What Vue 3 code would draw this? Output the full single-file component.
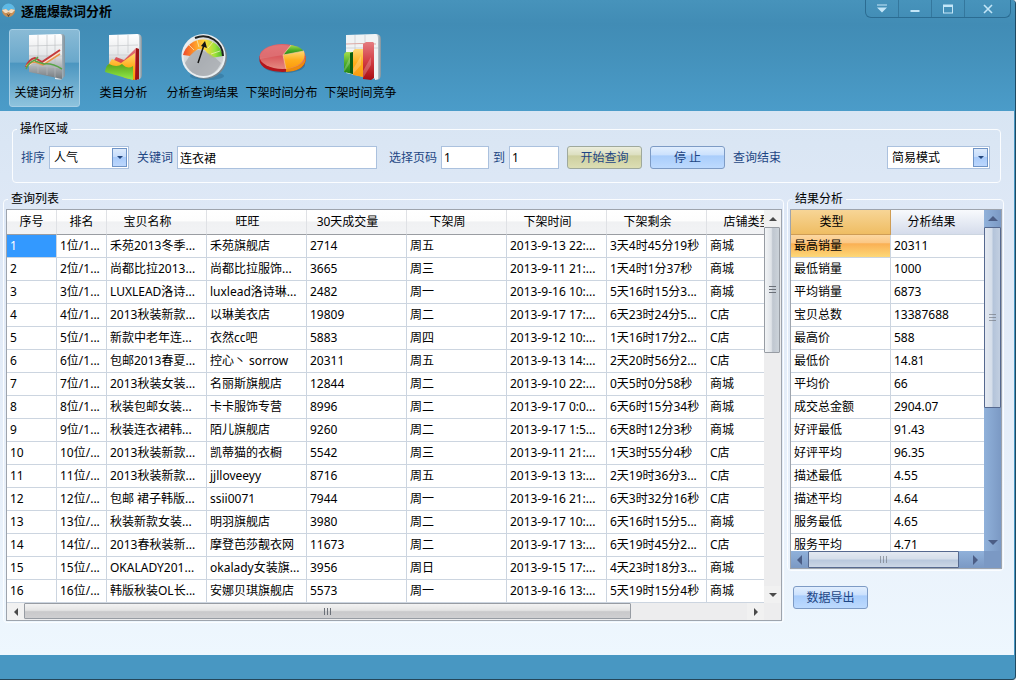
<script setup>
import { ref } from 'vue';

const tools = ['关键词分析', '类目分析', '分析查询结果', '下架时间分布', '下架时间竞争'];
const activeTool = ref(0);

const sort = ref('人气');
const keyword = ref('连衣裙');
const pageFrom = ref('1');
const pageTo = ref('1');
const mode = ref('简易模式');

const columns = ['序号', '排名', '宝贝名称', '旺旺', '30天成交量', '下架周', '下架时间', '下架剩余', '店铺类型'];
const rows = [
  ['1', '1位/1...', '禾苑2013冬季...', '禾苑旗舰店', '2714', '周五', '2013-9-13 22:...', '3天4时45分19秒', '商城'],
  ['2', '2位/1...', '尚都比拉2013...', '尚都比拉服饰...', '3665', '周三', '2013-9-11 21:...', '1天4时1分37秒', '商城'],
  ['3', '3位/1...', 'LUXLEAD洛诗...', 'luxlead洛诗琳...', '2482', '周一', '2013-9-16 10:...', '5天16时15分3...', '商城'],
  ['4', '4位/1...', '2013秋装新款...', '以琳美衣店', '19809', '周二', '2013-9-17 17:...', '6天23时24分5...', 'C店'],
  ['5', '5位/1...', '新款中老年连...', '衣然cc吧', '5883', '周四', '2013-9-12 10:...', '1天16时17分2...', 'C店'],
  ['6', '6位/1...', '包邮2013春夏...', '控心丶 sorrow', '20311', '周五', '2013-9-13 14:...', '2天20时56分2...', 'C店'],
  ['7', '7位/1...', '2013秋装女装...', '名丽斯旗舰店', '12844', '周二', '2013-9-10 22:...', '0天5时0分58秒', '商城'],
  ['8', '8位/1...', '秋装包邮女装...', '卡卡服饰专营', '8996', '周二', '2013-9-17 0:0...', '6天6时15分34秒', '商城'],
  ['9', '9位/1...', '秋装连衣裙韩...', '陌儿旗舰店', '9260', '周二', '2013-9-17 1:5...', '6天8时12分3秒', '商城'],
  ['10', '10位/...', '2013秋装新款...', '凯蒂猫的衣橱', '5542', '周三', '2013-9-11 21:...', '1天3时55分4秒', 'C店'],
  ['11', '11位/...', '2013秋装新款...', 'jjlloveeyy', '8716', '周五', '2013-9-13 13:...', '2天19时36分3...', 'C店'],
  ['12', '12位/...', '包邮 裙子韩版...', 'ssii0071', '7944', '周一', '2013-9-16 21:...', '6天3时32分16秒', 'C店'],
  ['13', '13位/...', '秋装新款女装...', '明羽旗舰店', '3980', '周二', '2013-9-17 10:...', '6天16时15分5...', '商城'],
  ['14', '14位/...', '2013春秋装新...', '摩登芭莎靓衣网', '11673', '周二', '2013-9-17 13:...', '6天19时45分2...', 'C店'],
  ['15', '15位/...', 'OKALADY201...', 'okalady女装旗...', '3956', '周日', '2013-9-15 17:...', '4天23时18分3...', '商城'],
  ['16', '16位/...', '韩版秋装OL长...', '安娜贝琪旗舰店', '5573', '周一', '2013-9-16 13:...', '5天19时15分4秒', '商城']
];

const results = [
  ['最高销量', '20311'],
  ['最低销量', '1000'],
  ['平均销量', '6873'],
  ['宝贝总数', '13387688'],
  ['最高价', '588'],
  ['最低价', '14.81'],
  ['平均价', '66'],
  ['成交总金额', '2904.07'],
  ['好评最低', '91.43'],
  ['好评平均', '96.35'],
  ['描述最低', '4.55'],
  ['描述平均', '4.64'],
  ['服务最低', '4.65'],
  ['服务平均', '4.71']
];
</script>

<template>
  <div class="window">
    <header class="top">
      <div class="title-bar">
        <svg class="logo" viewBox="0 0 15 15">
          <circle cx="7.5" cy="7.5" r="6.5" fill="#c98f55" />
          <path d="M1 7A6.5 6.5 0 0 1 14 7L10 6 7.500 8 5 6Z" fill="#5db9e6" />
          <path d="M1 7l4-1 2.500 2L10 6l4 1-3 3H9.500L7.500 9 5.500 10H4Z" fill="#f3dcc0" />
          <path d="M5.500 10.500l2 1.500 2-1.500-2 3.500Z" fill="#5c4630" />
        </svg>
        <h1>逐鹿爆款词分析</h1>
        <div class="win-controls">
          <button type="button" aria-label="菜单">
            <svg viewBox="0 0 12 10"><path d="M1 .5h10v1H1zM1 3.500h10L6 8.500Z" fill="#c3e6f8" /></svg>
          </button>
          <button type="button" aria-label="最小化">
            <svg viewBox="0 0 12 10"><path d="M1.500 6h9v2h-9z" fill="#c3e6f8" /></svg>
          </button>
          <button type="button" aria-label="最大化">
            <svg viewBox="0 0 12 10"><path d="M1 .5h10v9H1zM2 3v5.500h8V3Z" fill="#c3e6f8" fill-rule="evenodd" /></svg>
          </button>
          <button type="button" class="close" aria-label="关闭">
            <svg viewBox="0 0 12 10"><path d="M2 1l8 8M10 1L2 9" stroke="#c3e6f8" stroke-width="1.600" /></svg>
          </button>
        </div>
      </div>

      <svg class="defs" aria-hidden="true">
        <defs>
          <linearGradient id="paper" x1="0" y1="0" x2="0" y2="1">
            <stop offset="0" stop-color="#ffffff" />
            <stop offset=".45" stop-color="#e6e8ea" />
            <stop offset="1" stop-color="#73797e" />
          </linearGradient>
          <linearGradient id="side" x1="0" y1="0" x2="1" y2="0">
            <stop offset="0" stop-color="#f4f8fa" />
            <stop offset="1" stop-color="#7f919c" />
          </linearGradient>
          <linearGradient id="red" x1="0" y1="0" x2="0" y2="1">
            <stop offset="0" stop-color="#e57c80" />
            <stop offset=".5" stop-color="#d33f45" />
            <stop offset="1" stop-color="#a80d12" />
          </linearGradient>
          <linearGradient id="rose" x1="0" y1="0" x2="0" y2="1">
            <stop offset="0" stop-color="#df6266" />
            <stop offset=".5" stop-color="#d9595d" />
            <stop offset="1" stop-color="#e58a80" />
          </linearGradient>
          <linearGradient id="green" x1="0" y1="0" x2="0" y2="1">
            <stop offset="0" stop-color="#a5dd4c" />
            <stop offset=".5" stop-color="#4fae2a" />
            <stop offset="1" stop-color="#1f8412" />
          </linearGradient>
          <linearGradient id="lime" x1="0" y1="0" x2="0" y2="1">
            <stop offset="0" stop-color="#5aa51b" />
            <stop offset="1" stop-color="#93ec4a" />
          </linearGradient>
          <linearGradient id="gold" x1="0" y1="0" x2="0" y2="1">
            <stop offset="0" stop-color="#ffd873" />
            <stop offset=".5" stop-color="#ffae1d" />
            <stop offset="1" stop-color="#fb9a0c" />
          </linearGradient>
          <linearGradient id="dial" x1="0" y1="0" x2="1" y2="1">
            <stop offset="0" stop-color="#ffffff" />
            <stop offset=".55" stop-color="#b9bdc0" />
            <stop offset="1" stop-color="#dfe3e6" />
          </linearGradient>
          <linearGradient id="scale" x1="0" y1="0" x2="1" y2="0">
            <stop offset="0" stop-color="#ee4a2c" />
            <stop offset=".3" stop-color="#ff9a2a" />
            <stop offset=".55" stop-color="#ffd93a" />
            <stop offset=".8" stop-color="#9be23c" />
            <stop offset="1" stop-color="#46b52a" />
          </linearGradient>
        </defs>
      </svg>

      <nav class="tools">
        <button
          v-for="(tool, i) in tools"
          :key="tool"
          type="button"
          class="tool"
          :class="{ active: i === activeTool }"
          @click="activeTool = i"
        >
          <svg v-if="i === 0" viewBox="0 0 48 48">
            <path d="M38 1h3q3 0 3 4v38l-4 4-6-1Z" fill="url(#side)" />
            <path d="M8 2L39 1Q41 1 41 4V46L8 39Z" fill="url(#paper)" />
            <path d="M17 2v38M26 2v40M34 2v42M8 13l33-1M8 23h33M8 32l33 3" stroke="#b9bcc0" stroke-width=".6" fill="none" />
            <path d="M6 34q3-7 8-8l7 3 18-12v5l-17 10-8-3Z" fill="#f8e3d3" />
            <path d="M5 34q3-8 9-9l7 4 18-12" stroke="#c43a3c" stroke-width="2" fill="none" />
            <path d="M5 33q5-4 9-4l8 3 17-11" stroke="#e8954a" stroke-width="1.500" fill="none" />
            <path d="M5 36q3-7 9-9l3-3M14 28l9 3q8-1 18 5" stroke="#57a447" stroke-width="1.500" fill="none" />
          </svg>
          <svg v-else-if="i === 1" viewBox="0 0 48 48">
            <path d="M37 1q5 0 5 5v36q0 4-5 5Z" fill="url(#side)" />
            <path d="M9 2L37 1q2 0 2 4v42L9 38Z" fill="url(#paper)" />
            <path d="M18 2v20M28 2v18M9 13l29-1M9 22h25" stroke="#c5c8cb" stroke-width=".7" />
            <path d="M11 32l5-8 8 3L36 15l3 1v30l-5 1Z" fill="url(#red)" />
            <path d="M7 34l5-8 9 4 14-10v27l-10-2Z" fill="url(#gold)" />
            <path d="M5 39q1-7 4-8 8 4 13 0 6 6 11 2v14Z" fill="url(#lime)" />
            <path d="M36 15l3 1v29l-3 2Z" fill="#9b1517" />
          </svg>
          <svg v-else-if="i === 2" viewBox="0 0 48 48">
            <ellipse cx="28" cy="43" rx="17" ry="4" fill="#2d6d94" opacity=".5" />
            <circle cx="26" cy="24" r="22" fill="#768690" />
            <circle cx="24.500" cy="23" r="22" fill="#e9eef1" />
            <circle cx="24.500" cy="23" r="20" fill="url(#dial)" />
            <path d="M4 22A20.500 20.500 0 0 1 44 23l-12 2-6-8-7-1-8 7Z" fill="url(#scale)" />
            <path d="M16 5a20 20 0 0 1 28 18" stroke="#20211f" stroke-width="2" fill="none" />
            <path d="M10 12l5 5M18 7l2 7M34 9l-5 6M41 18l-9 3" stroke="#f8f2c5" stroke-width=".7" />
            <path d="M6 30q8-14 14-13 11 2 22 13-6 13-18 13Q11 42 6 30Z" fill="#a5aaaf" opacity=".75" />
            <path d="M19 30L25 12" stroke="#151515" stroke-width="1.500" />
            <path d="M26 8l2 7-6-2Z" fill="#151515" />
          </svg>
          <svg v-else-if="i === 3" viewBox="0 0 48 48">
            <ellipse cx="26" cy="32" rx="21" ry="8" fill="#245f83" opacity=".5" />
            <path d="M1.500 23v5q2 10 23 11 22-1 23-11v-5Z" fill="#b3151b" />
            <path d="M28 34v5q17-1 19.500-11v-5Z" fill="#ed8b0d" />
            <ellipse cx="24.500" cy="23.500" rx="23" ry="12.500" fill="url(#rose)" />
            <path d="M25 22l8-10q11 2 13 7Z" fill="url(#green)" />
            <path d="M25 22l21-4q4 14-18 18Z" fill="url(#gold)" />
            <path d="M4 19q5-7 19-7 6 0 10 1l-8 9-23 4q-1-4 2-7Z" fill="#fff" opacity=".12" />
            <path d="M33 12l-8 10 3 14M25 22l21-4" stroke="#f7c5a0" stroke-width=".7" fill="none" />
          </svg>
          <svg v-else viewBox="0 0 48 48">
            <path d="M38 1q6 0 6 5v36q0 5-6 5Z" fill="url(#side)" />
            <path d="M9 2L38 1q3 0 3 5v40l-9-1L9 40Z" fill="#f0f3f4" />
            <path d="M18 2v20M28 2v18M9 15h32" stroke="#c5c8cb" stroke-width=".7" />
            <path d="M9 11q15-1 30 0" stroke="#dca9a4" fill="none" />
            <path d="M7 21l2-2h6l1 1v21l-9-2Z" fill="url(#green)" />
            <path d="M13 20l3-1v22l-3-1Z" fill="#0d5d13" />
            <path d="M16 18l2-2h8v28l-10-2Z" fill="url(#gold)" />
            <path d="M26 11l3-2h7l1 1v35l-3 2-8-1Z" fill="url(#red)" />
            <path d="M7 36l6-12v6l-6 9ZM16 36l8-13v9l-8 9ZM26 38l8-14v8l-8 13Z" fill="#fff" opacity=".22" />
          </svg>
          <span>{{ tool }}</span>
        </button>
      </nav>
    </header>

    <main class="content">
      <fieldset class="group search">
        <legend>操作区域</legend>
        <form class="search-row" @submit.prevent>
          <div class="field">
            <label for="sort">排序</label>
            <span class="select-box sort-box">
              <select id="sort" v-model="sort">
                <option>人气</option>
                <option>销量</option>
              </select>
              <span class="arrow"></span>
            </span>
          </div>
          <div class="field keyword">
            <label for="keyword">关键词</label>
            <input id="keyword" v-model="keyword" type="text">
          </div>
          <div class="field pages">
            <label for="page-from">选择页码</label>
            <input id="page-from" v-model="pageFrom" type="text">
            <label for="page-to">到</label>
            <input id="page-to" v-model="pageTo" type="text">
          </div>
          <div class="actions">
            <button type="submit" class="btn khaki">开始查询</button>
            <button type="button" class="btn">停 止</button>
            <span>查询结束</span>
          </div>
          <span class="select-box mode-box">
            <select v-model="mode" aria-label="模式">
              <option>简易模式</option>
              <option>完整模式</option>
            </select>
            <span class="arrow"></span>
          </span>
        </form>
      </fieldset>

      <div class="panels">
        <fieldset class="group list">
          <legend>查询列表</legend>
          <div class="frame">
            <div class="viewport">
              <table class="grid list-table">
                <colgroup>
                  <col v-for="(col, i) in columns" :key="col" :class="i < 2 ? 'narrow' : 'wide'">
                </colgroup>
                <thead>
                  <tr><th v-for="col in columns" :key="col">{{ col }}</th></tr>
                </thead>
                <tbody>
                  <tr v-for="(row, r) in rows" :key="row[0]">
                    <td v-for="(cell, c) in row" :key="c" :class="{ selected: r === 0 && c === 0 }">{{ cell }}</td>
                  </tr>
                </tbody>
              </table>
            </div>
            <div class="bar vertical">
              <button type="button" aria-label="向上"><i class="tri up"></i></button>
              <div class="track"><div class="thumb"><i class="grip"></i></div></div>
              <button type="button" aria-label="向下"><i class="tri down"></i></button>
            </div>
            <div class="bar horizontal">
              <button type="button" aria-label="向左"><i class="tri left"></i></button>
              <div class="track"><div class="thumb"><i class="grip"></i></div></div>
              <button type="button" aria-label="向右"><i class="tri right"></i></button>
            </div>
            <div class="corner"></div>
          </div>
        </fieldset>

        <aside class="side">
          <fieldset class="group">
            <legend>结果分析</legend>
            <div class="frame blue">
              <div class="viewport">
                <table class="grid result-table">
                  <thead>
                    <tr><th>类型</th><th>分析结果</th></tr>
                  </thead>
                  <tbody>
                    <tr v-for="item in results" :key="item[0]">
                      <td>{{ item[0] }}</td>
                      <td>{{ item[1] }}</td>
                    </tr>
                  </tbody>
                </table>
              </div>
              <div class="bar vertical">
                <button type="button" aria-label="向上"><i class="tri up"></i></button>
                <div class="track"><div class="thumb"><i class="grip"></i></div></div>
                <button type="button" aria-label="向下"><i class="tri down"></i></button>
              </div>
              <div class="bar horizontal">
                <button type="button" aria-label="向左"><i class="tri left"></i></button>
                <div class="track"><div class="thumb"><i class="grip"></i></div></div>
                <button type="button" aria-label="向右"><i class="tri right"></i></button>
              </div>
              <div class="corner"></div>
            </div>
          </fieldset>
          <button type="button" class="btn export">数据导出</button>
        </aside>
      </div>
    </main>
    <footer class="status"></footer>
  </div>
</template>

<style>
body {
  background: #e9eef2;
}
#app {
  display: flex;
  flex-direction: column;
  min-height: 100vh;
  padding-bottom: 1px;
  box-sizing: border-box;
}
</style>

<style scoped>
* {
  box-sizing: border-box;
}
.window {
  flex: 1;
  display: flex;
  flex-direction: column;
  background: #4897c2;
  border-right: 1px solid #1f4a63;
  border-bottom: 1px solid #24465a;
  border-radius: 0 4px 4px 0;
  font-family: "Noto Sans", "Noto Sans CJK SC", sans-serif;
  font-size: 12px;
  line-height: 16px;
  color: #000;
}
button, input, select {
  font: inherit;
  margin: 0;
}

/* title bar and toolbar */
.top {
  background: linear-gradient(#4793bb 0, #418cb5 24px, #4491bb 55px, #4b9cc9 100%);
  border-radius: 0 4px 0 0;
}
.title-bar {
  display: flex;
  align-items: flex-start;
  height: 24px;
  padding: 3px 4px 0 1px;
}
.logo {
  width: 15px;
  height: 15px;
}
h1 {
  margin: 0 0 0 5px;
  font-size: 13px;
  line-height: 16px;
  font-weight: 700;
}
.win-controls {
  display: flex;
  height: 18px;
  margin: -3px 0 0 auto;
  border: 1px solid #2b6c92;
  border-top: 0;
  border-radius: 0 0 6px 6px;
}
.win-controls button {
  display: flex;
  align-items: center;
  justify-content: center;
  width: 33px;
  padding: 0;
  border: 0;
  border-right: 1px solid #34779d;
  background: none;
}
.win-controls .close {
  width: 45px;
  border-right: 0;
}
.win-controls svg {
  width: 12px;
  height: 10px;
}
.defs {
  display: block;
  width: 0;
  height: 0;
}
.tools {
  display: flex;
  gap: 8px;
  padding: 5px 9px 4px;
}
.tool {
  display: flex;
  flex-direction: column;
  align-items: center;
  width: 71px;
  height: 78px;
  padding: 3px 0 0;
  border: 1px solid transparent;
  border-radius: 3px;
  background: none;
  color: #000;
  white-space: nowrap;
}
.tool.active {
  border-color: #a6cfe6;
  background: linear-gradient(#8abbd6 0, #6aa8cb 42%, #4c96c0 44%, #8ec3dd 100%);
}
.tool svg {
  flex: none;
  width: 48px;
  height: 48px;
  margin-bottom: 4px;
}

/* content */
.content {
  flex: 1;
  margin-right: 1px;
  padding: 10px 10px 32px 3px;
  background: linear-gradient(#d8e5f3, #dee8f6 18%, #e8f0fa 70%, #eef7fe);
}
.group {
  min-width: 0;
  margin: 0;
  padding: 2px 1px 1px 2px;
  border: 1px solid #fbfdff;
  border-radius: 4px;
}
.group legend {
  margin-left: 2px;
  padding: 0 3px;
}
.search {
  margin: 0 3px 8px 9px;
  padding: 9px 10px 13px 8px;
}
.search legend {
  margin-left: -4px;
}
.search-row {
  display: flex;
  align-items: center;
  gap: 8px;
  color: #1e4684;
}
.field, .actions {
  display: flex;
  align-items: center;
  white-space: nowrap;
}
.field {
  gap: 4px;
}
.pages {
  margin-left: 4px;
}
.pages input {
  width: 48px;
}
.pages input:last-child {
  width: 50px;
}
.actions {
  gap: 8px;
}
input {
  width: 200px;
  height: 23px;
  padding: 0 2px;
  border: 1px solid #abc1de;
  background: #fff;
  color: #000;
}
.select-box {
  position: relative;
}
.sort-box {
  width: 80px;
}
.mode-box {
  width: 103px;
  margin-left: auto;
}
select {
  display: block;
  width: 100%;
  height: 23px;
  padding: 0 20px 0 4px;
  border: 1px solid #abc1de;
  border-radius: 0;
  background: #fff;
  color: #000;
  appearance: none;
}
.arrow {
  position: absolute;
  top: 2px;
  right: 2px;
  bottom: 2px;
  display: flex;
  align-items: center;
  justify-content: center;
  width: 15px;
  border: 1px solid #6f94c6;
  background: linear-gradient(#dceafc 0, #c5dcfb 48%, #a9cbfa 50%, #bcd7fd 100%);
  pointer-events: none;
}
.arrow::after {
  content: '';
  border: 3px solid transparent;
  border-top-color: #23477f;
  border-bottom: 0;
}
.btn {
  width: 75px;
  height: 23px;
  padding: 0;
  border: 1px solid #7d9bc5;
  border-radius: 3px;
  background: linear-gradient(#e1eefe 0, #cbe1fd 38%, #a9cdfb 42%, #bddafe 100%);
  color: #1e4684;
}
.khaki {
  border-color: #9fa99c;
  background: linear-gradient(#eceedd 0, #dcdfc0 38%, #cdcf9f 42%, #dcdeb4 100%);
}

/* tables */
.panels {
  display: flex;
  align-items: flex-start;
  gap: 3px;
}
.list {
  flex: 1;
}
.side {
  width: 217px;
}
.frame {
  display: grid;
  grid-template-columns: minmax(0, 1fr) 17px;
  grid-template-rows: minmax(0, 1fr) 17px;
  border: 1px solid #9ea4ad;
  background: #fff;
}
.viewport {
  overflow: hidden;
}
.blue .viewport {
  height: 341px;
}
.grid {
  table-layout: fixed;
  border-collapse: separate;
  border-spacing: 0;
}
.list-table {
  width: 800px;
}
.result-table {
  width: 200px;
}
.narrow {
  width: 50px;
}
.wide {
  width: 100px;
}
th {
  height: 25px;
  padding: 0 18px 0 0;
  border-right: 1px solid #dfe1e5;
  border-bottom: 1px solid #9a9da2;
  background: linear-gradient(#fff 0, #fdfdfd 45%, #f0f1f3 50%, #f2f3f5 100%);
  font-weight: 400;
  white-space: nowrap;
}
.list-table th:nth-child(-n + 2) {
  padding: 0;
}
td {
  height: 23px;
  padding: 0 0 0 3px;
  border-right: 1px solid #ccd5e0;
  border-bottom: 1px solid #ccd5e0;
  white-space: nowrap;
}
td.selected {
  background: #3399ff;
  color: #fff;
}
.result-table td, .result-table th {
  border-color: #ccd5e0;
}
.result-table th {
  background: linear-gradient(#f8fafd, #d5dceb);
}
.result-table th:first-child {
  border-color: #cf9d55;
  background: linear-gradient(#f7d596, #efbd63);
}
.result-table tbody tr:first-child td:first-child {
  background: linear-gradient(#fcd8a2 0, #fbc886 35%, #fab054 40%, #fdd878 100%);
}

/* scroll bars */
.bar {
  display: flex;
  background: #ededee;
}
.vertical {
  flex-direction: column;
}
.bar button {
  display: flex;
  align-items: center;
  justify-content: center;
  flex: 0 0 17px;
  height: 17px;
  padding: 0;
  border: 0;
  background: #f1f1f1;
}
.track {
  flex: 1;
}
.thumb {
  display: flex;
  align-items: center;
  justify-content: center;
  border: 1px solid #979ca3;
  border-radius: 1px;
}
.vertical .thumb {
  width: 16px;
  height: 35%;
  background: linear-gradient(90deg, #f2f4f6 0, #dfe3e8 45%, #c0c7d0 55%, #ccd3da 100%);
}
.horizontal .thumb {
  width: 84%;
  height: 16px;
  background: linear-gradient(#f3f3f3 0, #e4e4e4 45%, #c9c9cb 55%, #cfcfd1 100%);
}
.vertical .grip {
  width: 7px;
  height: 8px;
  background: repeating-linear-gradient(#6b7078 0 1px, transparent 1px 3px);
}
.horizontal .grip {
  width: 8px;
  height: 7px;
  background: repeating-linear-gradient(90deg, #6b7078 0 1px, transparent 1px 3px);
}
.tri {
  border: 4px solid transparent;
}
.up {
  border-top: 0;
  border-bottom-color: #4a4a4a;
}
.down {
  border-bottom: 0;
  border-top-color: #4a4a4a;
}
.left {
  border-left: 0;
  border-right-color: #4a4a4a;
}
.right {
  border-right: 0;
  border-left-color: #4a4a4a;
}
.corner {
  background: #ededee;
}
.blue .vertical {
  background: linear-gradient(90deg, #90b1da, #7b99c4);
}
.blue .horizontal {
  background: linear-gradient(#90b1da, #7b99c4);
}
.blue .bar button {
  background: none;
}
.blue .vertical .thumb {
  width: 17px;
  height: 59%;
  border-color: #56698f;
  background: linear-gradient(90deg, #e4e9f1 0, #d5deea 45%, #b4c4da 55%, #c2cfe1 100%);
}
.blue .horizontal .thumb {
  width: 95%;
  height: 17px;
  border-color: #56698f;
  background: linear-gradient(#e4e9f1 0, #d5deea 45%, #b9c8dd 55%, #ccd7e6 100%);
}
.blue .grip {
  opacity: .6;
}
.blue .tri {
  border-width: 5px;
}
.blue .up {
  border-top: 0;
  border-bottom-color: #4b5d85;
}
.blue .down {
  border-bottom: 0;
  border-top-color: #4b5d85;
}
.blue .left {
  border-left: 0;
  border-right-color: #4b5d85;
}
.blue .right {
  border-right: 0;
  border-left-color: #4b5d85;
}
.blue .corner {
  background: #7b99c4;
}
.export {
  margin: 15px 0 0 6px;
}
.status {
  height: 24px;
}
</style>
